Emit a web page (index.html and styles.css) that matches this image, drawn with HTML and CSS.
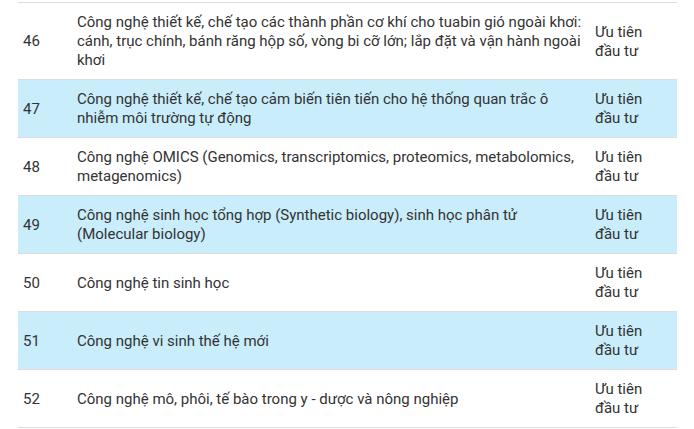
FILE: index.html
```html
<!DOCTYPE html>
<html lang="vi">
<head>
<meta charset="utf-8">
<title>Danh mục công nghệ</title>
<link rel="stylesheet" href="styles.css">
</head>
<body>
<div class="wrap">
<table class="tech">
<colgroup><col class="c-no"><col class="c-name"><col class="c-type"></colgroup>
<tbody>
<tr class="first"><td>46</td><td>Công nghệ thiết kế, chế tạo các thành phần cơ khí cho tuabin gió ngoài khơi:<br>cánh, trục chính, bánh răng hộp số, vòng bi cỡ lớn; lắp đặt và vận hành ngoài<br>khơi</td><td>Ưu tiên<br>đầu tư</td></tr>
<tr class="alt"><td>47</td><td>Công nghệ thiết kế, chế tạo cảm biến tiên tiến cho hệ thống quan trắc ô<br>nhiễm môi trường tự động</td><td>Ưu tiên<br>đầu tư</td></tr>
<tr><td>48</td><td>Công nghệ OMICS (Genomics, transcriptomics, proteomics, metabolomics,<br>metagenomics)</td><td>Ưu tiên<br>đầu tư</td></tr>
<tr class="alt"><td>49</td><td>Công nghệ sinh học tổng hợp (Synthetic biology), sinh học phân tử<br>(Molecular biology)</td><td>Ưu tiên<br>đầu tư</td></tr>
<tr><td>50</td><td>Công nghệ tin sinh học</td><td>Ưu tiên<br>đầu tư</td></tr>
<tr class="alt"><td>51</td><td>Công nghệ vi sinh thế hệ mới</td><td>Ưu tiên<br>đầu tư</td></tr>
<tr><td>52</td><td>Công nghệ mô, phôi, tế bào trong y - dược và nông nghiệp</td><td>Ưu tiên<br>đầu tư</td></tr>
</tbody>
</table>
</div>
</body>
</html>
```
FILE: styles.css
```css
html, body {
  margin: 0;
  padding: 0;
  background: #ffffff;
}
.wrap {
  padding: 2px 0 0 18px;
}
.tech {
  width: 659px;
  border-collapse: collapse;
  table-layout: fixed;
  font-family: Roboto, "Liberation Sans", sans-serif;
  font-size: 15px;
  line-height: 19px;
  color: #333333;
}
.c-no { width: 54px; }
.c-name { width: 518px; }
.c-type { width: 87px; }
.tech td {
  padding: 10px 5px 9px 5px;
  vertical-align: middle;
  border-top: 1px solid #dcdcdc;
  border-bottom: 1px solid #dcdcdc;
  white-space: nowrap;
}
.tech tr.alt td {
  background: #c9edfa;
}
```
